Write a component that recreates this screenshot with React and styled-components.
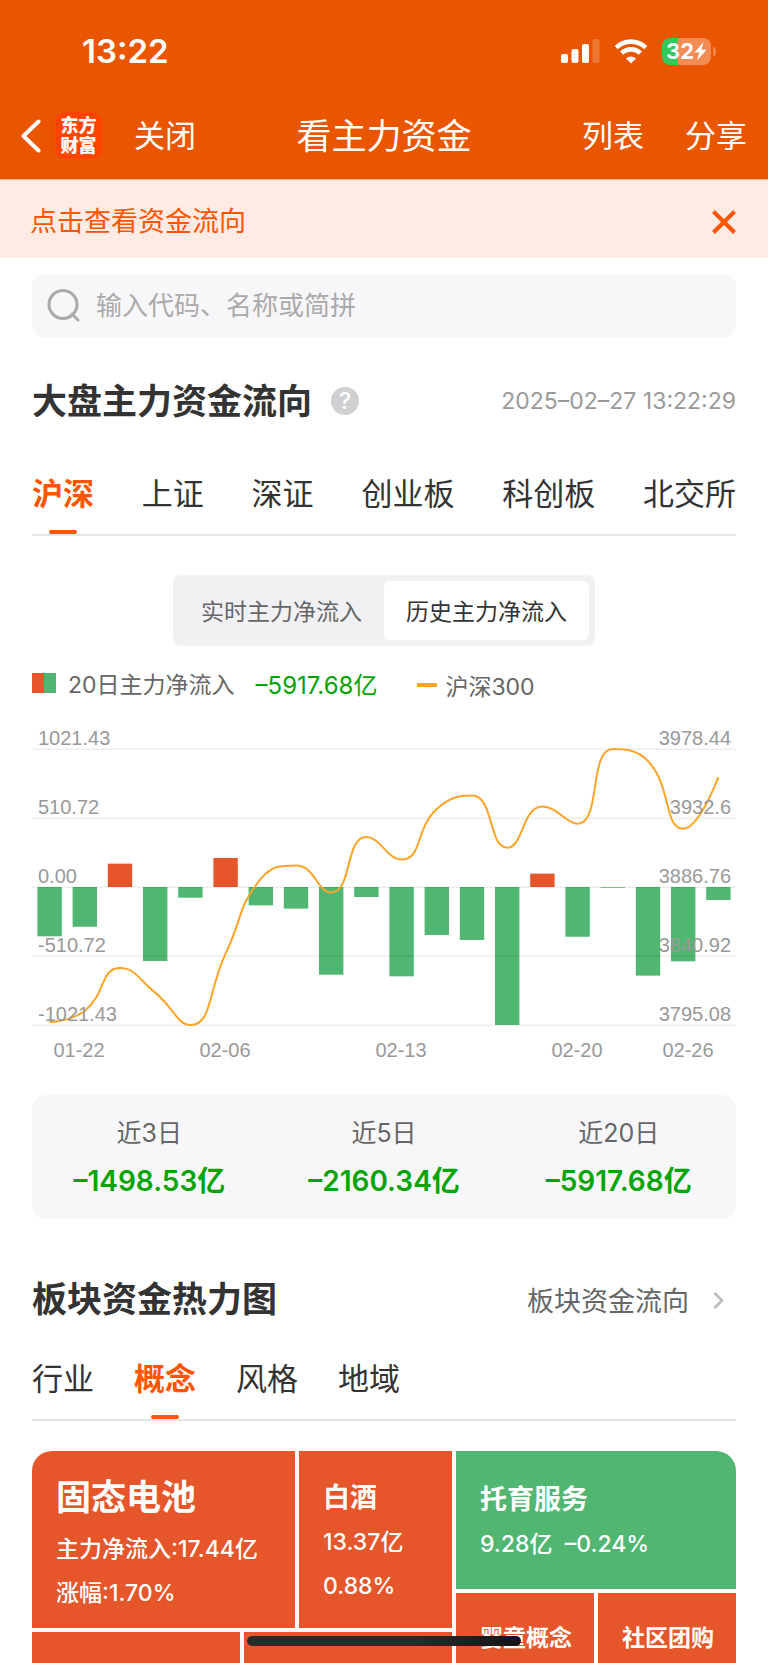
import React, { useState } from "react";
import styled, { createGlobalStyle } from "styled-components";

const GlobalStyle = createGlobalStyle`
  * {
    box-sizing: border-box;
  }
  body {
    margin: 0;
    background: #fff;
    color: #333;
    font-family: Inter, "Noto Sans CJK SC", sans-serif;
  }
  button, input {
    font-family: inherit;
    margin: 0;
    padding: 0;
    border: 0;
    background: none;
    color: inherit;
  }
  h1, h2, h3, p {
    margin: 0;
  }
  svg {
    display: block;
    flex: none;
  }
`;

const Header = styled.header`
  background: #ea5500;
  color: #fff;
  border-bottom: 1px solid #f8b596;
`;

const StatusBar = styled.div`
  display: flex;
  justify-content: space-between;
  align-items: center;
  height: 102px;
  padding: 0 52px 0 82px;
`;

const Clock = styled.span`
  font-size: 33px;
  font-weight: 600;
`;

const StatusIcons = styled.div`
  display: flex;
  align-items: center;
  gap: 14px;
`;

const Battery = styled.div`
  display: flex;
  align-items: center;
  gap: 2px;
`;

const BatteryBody = styled.div`
  display: flex;
  align-items: center;
  justify-content: center;
  width: 49px;
  height: 27px;
  border-radius: 8px;
  background: linear-gradient(90deg, #34c759 32%, #f38b54 32%);
  font-size: 22px;
  font-weight: 700;
  line-height: 27px;
`;

const BatteryNub = styled.div`
  width: 3px;
  height: 9px;
  border-radius: 0 3px 3px 0;
  background: #f0824a;
`;

const NavBar = styled.nav`
  display: grid;
  grid-template-columns: 1fr auto 1fr;
  align-items: center;
  height: 77px;
  padding: 0 21px 10px;
`;

const NavSide = styled.div`
  display: flex;
  align-items: center;
  justify-content: ${(props) => (props.$end ? "flex-end" : "flex-start")};
  gap: ${(props) => (props.$end ? "41px" : "14px")};
`;

const NavTitle = styled.h1`
  font-size: 35px;
  font-weight: 400;
  line-height: 48px;
`;

const NavButton = styled.button`
  font-size: 31px;
  line-height: 48px;
`;

const Logo = styled.div`
  display: flex;
  align-items: center;
  justify-content: center;
  width: 47px;
  height: 47px;
  margin-right: 18px;
  border-radius: 10px;
  background: #ff4400;
  font-size: 18px;
  font-weight: 900;
  line-height: 20px;
  text-align: center;
`;

const Notice = styled.div`
  display: flex;
  justify-content: space-between;
  align-items: center;
  height: 78px;
  padding: 0 32px 0 30px;
  background: #ffebe4;
  color: #ff5500;
  font-size: 27px;
`;

const CloseButton = styled.button`
  padding-top: 6px;
`;

const Main = styled.main`
  padding: 16px 32px 0;
`;

const SearchBox = styled.label`
  display: flex;
  align-items: center;
  gap: 16px;
  height: 63px;
  padding: 0 15px;
  border-radius: 12px;
  background: #f7f7fa;
`;

const SearchInput = styled.input`
  flex: 1;
  min-width: 0;
  height: 100%;
  font-size: 26px;
  outline: none;
  &::placeholder {
    color: #aaa;
    opacity: 1;
  }
`;

const SectionHead = styled.div`
  display: flex;
  align-items: center;
  justify-content: space-between;
  margin-top: ${(props) => props.$top}px;
`;

const TitleGroup = styled.div`
  display: flex;
  align-items: center;
  gap: 19px;
`;

const SectionTitle = styled.h2`
  font-size: 35px;
  font-weight: 600;
  line-height: 50px;
`;

const HelpButton = styled.button`
  width: 28px;
  height: 28px;
  border-radius: 50%;
  background: #d0d0d3;
  color: #fff;
  font-size: 23px;
  font-weight: 500;
  line-height: 28px;
`;

const DateText = styled.time`
  color: #999;
  font-size: 23px;
`;

const MoreLink = styled.a`
  display: flex;
  align-items: center;
  gap: 24px;
  padding-right: 12px;
  color: #666;
  font-size: 27px;
  text-decoration: none;
`;

const Tabs = styled.div`
  display: flex;
  justify-content: ${(props) => (props.$spread ? "space-between" : "flex-start")};
  gap: ${(props) => (props.$spread ? "0" : "40px")};
  margin-top: ${(props) => props.$top}px;
  border-bottom: 2px solid #e6e6e8;
`;

const Tab = styled.button`
  display: flex;
  flex-direction: column;
  align-items: center;
  gap: 12px;
  font-size: 31px;
  line-height: 48px;
  font-weight: ${(props) => (props.$active ? 600 : 400)};
  color: ${(props) => (props.$active ? "#ff5500" : "#333")};
  &::after {
    content: "";
    width: 28px;
    height: 4px;
    border-radius: 2px;
    background: ${(props) => (props.$active ? "#ff5500" : "transparent")};
  }
`;

const Segmented = styled.div`
  display: flex;
  width: fit-content;
  margin: 39px auto 0;
  padding: 6px;
  border-radius: 8px;
  background: #f1f1f4;
`;

const Segment = styled.button`
  width: 205px;
  height: 59px;
  padding-bottom: 2px;
  border-radius: 6px;
  font-size: 23px;
  color: ${(props) => (props.$active ? "#333" : "#666")};
  background: ${(props) => (props.$active ? "#fff" : "transparent")};
`;

const Legend = styled.div`
  display: flex;
  align-items: center;
  height: 36px;
  margin-top: 19px;
  color: #666;
  font-size: 23px;
`;

const LineLegend = styled.div`
  display: flex;
  align-items: center;
  padding-top: 4px;
`;

const BarSwatch = styled.span`
  width: 24px;
  height: 20px;
  margin-right: 12px;
  background: linear-gradient(90deg, #e6562b 50%, #50b671 50%);
`;

const LineSwatch = styled.span`
  width: 20px;
  height: 4px;
  margin: 0 8px 0 40px;
  background: #fba428;
`;

const LegendValue = styled.span`
  margin-left: 21px;
  color: #04a404;
  font-size: 24px;
`;

const ChartSvg = styled.svg`
  width: 100%;
  height: auto;
  margin-top: 22px;
  font-family: "Liberation Sans", sans-serif;
  font-size: 20px;
  fill: #999;
`;

const Summary = styled.div`
  display: grid;
  grid-template-columns: repeat(3, 1fr);
  margin-top: 30px;
  padding: 20px 0;
  border-radius: 14px;
  background: #f7f7fa;
  text-align: center;
  line-height: 36px;
`;

const SummaryLabel = styled.p`
  color: #666;
  font-size: 25px;
`;

const SummaryValue = styled.p`
  margin-top: 12px;
  color: #04a404;
  font-size: 28px;
  font-weight: 600;
`;

const HeatMap = styled.div`
  display: grid;
  grid-template-columns: 3fr 2fr;
  gap: 4px;
  margin-top: 30px;
  border-radius: 20px 20px 0 0;
  overflow: hidden;
`;

const HeatColumn = styled.div`
  display: flex;
  flex-direction: column;
  gap: 4px;
`;

const HeatRow = styled.div`
  display: grid;
  grid-template-columns: ${(props) => props.$columns};
  gap: 4px;
  flex: ${(props) => (props.$fill ? 1 : "none")};
`;

const Tile = styled.div`
  min-height: ${(props) => props.$height || 31}px;
  padding: ${(props) => props.$pad || 0}px 0 0 24px;
  background: ${(props) => (props.$down ? "#50b671" : "#e6562b")};
  color: #fff;
  white-space: nowrap;
`;

const TileName = styled.h3`
  font-size: ${(props) => props.$size}px;
  font-weight: 600;
  line-height: ${(props) => (props.$size > 30 ? 52 : 36)}px;
`;

const TileText = styled.p`
  margin-top: 8px;
  font-size: 23px;
  font-weight: 500;
  line-height: 36px;
`;

const HomeIndicator = styled.div`
  position: fixed;
  left: 50%;
  bottom: 17px;
  width: 274px;
  height: 10px;
  margin-left: -137px;
  border-radius: 5px;
  background: linear-gradient(90deg, #2b2b2b 60%, #141414);
`;

const markets = ["沪深", "上证", "深证", "创业板", "科创板", "北交所"];
const boards = ["行业", "概念", "风格", "地域"];
const ranges = ["实时主力净流入", "历史主力净流入"];

const totals = [
  { label: "近3日", value: "–1498.53亿" },
  { label: "近5日", value: "–2160.34亿" },
  { label: "近20日", value: "–5917.68亿" },
];

// daily net inflow and index close, 20 trading days
const flows = [
  -365, -294, 173, -548, -79, 215, -136, -160, -649, -74,
  -661, -355, -392, -1021, 99, -368, -5, -656, -550, -96,
];
const closes = [
  3797, 3804.6, 3832.9, 3816.6, 3795.1, 3842.5, 3892.1, 3901, 3883.1, 3920,
  3905, 3938.6, 3947.5, 3912.9, 3940.2, 3928.8, 3978.4, 3970.4, 3925.5, 3959.7,
];
const grid = [
  ["1021.43", "3978.44"],
  ["510.72", "3932.6"],
  ["0.00", "3886.76"],
  ["-510.72", "3840.92"],
  ["-1021.43", "3795.08"],
];
const days = [
  [47, "01-22"],
  [193, "02-06"],
  [369, "02-13"],
  [545, "02-20"],
  [656, "02-26"],
];

const TOP = 26;
const STEP = 69;
const SLOT = 35.2;

const clamp = (v, a, b) => Math.min(Math.max(v, Math.min(a, b)), Math.max(a, b));

// bezier through all the points, control points kept between neighbours
const smoothPath = (points) => {
  let d = `M${points[0][0]} ${points[0][1]}`;
  let out = points[0];
  for (let i = 1; i < points.length; i++) {
    const prev = points[i - 1];
    const cur = points[i];
    const next = points[i + 1];
    if (!next) {
      d += `C${out} ${cur} ${cur}`;
      break;
    }
    const lenPrev = Math.hypot(cur[0] - prev[0], cur[1] - prev[1]);
    const lenNext = Math.hypot(next[0] - cur[0], next[1] - cur[1]);
    const ratio = lenNext / (lenNext + lenPrev);
    const after = cur.map((c, k) =>
      clamp(c + (next[k] - prev[k]) * 0.5 * ratio, c, next[k])
    );
    const before = cur.map((c, k) =>
      clamp(c - ((after[k] - c) * lenPrev) / lenNext, prev[k], c)
    );
    d += `C${out} ${before} ${cur}`;
    out = cur.map((c, k) => c + ((c - before[k]) * lenNext) / lenPrev);
  }
  return d;
};

const FlowChart = () => {
  const zero = TOP + STEP * 2;
  const points = closes.map((c, i) => [
    (i + 0.5) * SLOT,
    TOP + ((3978.44 - c) / 183.36) * STEP * 4,
  ]);
  return (
    <ChartSvg viewBox="0 0 704 342" role="img" aria-label="20日主力净流入">
      {flows.map((v, i) => {
        const h = (Math.abs(v) / 1021.43) * STEP * 2;
        return (
          <rect
            key={i}
            x={(i + 0.5) * SLOT - 12.2}
            y={v > 0 ? zero - h : zero}
            width="24.4"
            height={h}
            fill={v > 0 ? "#e6562b" : "#50b671"}
          />
        );
      })}
      {grid.map(([left], i) => (
        <rect key={left} x="0" y={TOP + STEP * i - 0.5} width="704" height="1.5" fill="#000" fillOpacity="0.07" />
      ))}
      <path d={smoothPath(points)} fill="none" stroke="#fba428" strokeWidth="2" />
      {grid.map(([left, right], i) => (
        <g key={left}>
          <text x="6" y={TOP + STEP * i - 4}>{left}</text>
          <text x="699" y={TOP + STEP * i - 4} textAnchor="end">{right}</text>
        </g>
      ))}
      {days.map(([x, day]) => (
        <text key={day} x={x} y="334" textAnchor="middle">{day}</text>
      ))}
    </ChartSvg>
  );
};

const App = () => {
  const [market, setMarket] = useState("沪深");
  const [board, setBoard] = useState("概念");
  const [range, setRange] = useState("历史主力净流入");

  return (
    <>
      <GlobalStyle />
      <Header>
        <StatusBar>
          <Clock>13:22</Clock>
          <StatusIcons>
            <svg width="39" height="24" viewBox="0 0 39 24" fill="#fff">
              <rect x="0" y="15" width="7" height="9" rx="2" />
              <rect x="10.5" y="10" width="7" height="14" rx="2" />
              <rect x="21" y="5" width="7" height="19" rx="2" />
              <rect x="31.5" y="0" width="7" height="24" rx="2" fillOpacity="0.2" />
            </svg>
            <svg width="34" height="25" viewBox="0 0 34 25" fill="none" stroke="#fff" strokeWidth="4.6">
              <path d="M2.2 8.6a21.2 21.2 0 0 1 29.6 0" />
              <path d="M7.6 14.2a13.4 13.4 0 0 1 18.8 0" />
              <path d="M17 24.6l-5-5a7.2 7.2 0 0 1 10 0z" fill="#fff" stroke="none" />
            </svg>
            <Battery>
              <BatteryBody>
                32
                <svg width="13" height="19" viewBox="0 0 13 19" fill="#fff">
                  <path d="M9.6 0L0.4 10.6h5L3 18.6l9.6-10.8H7.4z" />
                </svg>
              </BatteryBody>
              <BatteryNub />
            </Battery>
          </StatusIcons>
        </StatusBar>
        <NavBar>
          <NavSide>
            <NavButton aria-label="返回">
              <svg width="20" height="34" viewBox="0 0 20 34" fill="none" stroke="#fff" strokeWidth="4" strokeLinecap="round" strokeLinejoin="round">
                <path d="M17.5 2.5L2.5 17l15 14.5" />
              </svg>
            </NavButton>
            <Logo>东方<br />财富</Logo>
            <NavButton>关闭</NavButton>
          </NavSide>
          <NavTitle>看主力资金</NavTitle>
          <NavSide $end>
            <NavButton>列表</NavButton>
            <NavButton>分享</NavButton>
          </NavSide>
        </NavBar>
      </Header>

      <Notice>
        点击查看资金流向
        <CloseButton aria-label="关闭提示">
          <svg width="24" height="24" viewBox="0 0 24 24" stroke="#ff5500" strokeWidth="4">
            <path d="M1.5 1.5l21 21M22.5 1.5l-21 21" />
          </svg>
        </CloseButton>
      </Notice>

      <Main>
        <SearchBox>
          <svg width="33" height="33" viewBox="0 0 33 33" fill="none" stroke="#aaa" strokeWidth="3">
            <circle cx="16" cy="15.5" r="14" />
            <path d="M25 25l6 6" strokeLinecap="round" />
          </svg>
          <SearchInput type="text" aria-label="搜索" placeholder="输入代码、名称或简拼" />
        </SearchBox>

        <SectionHead $top={39}>
          <TitleGroup>
            <SectionTitle>大盘主力资金流向</SectionTitle>
            <HelpButton>?</HelpButton>
          </TitleGroup>
          <DateText>2025–02–27 13:22:29</DateText>
        </SectionHead>

        <Tabs $top={44} $spread>
          {markets.map((name) => (
            <Tab key={name} $active={name === market} onClick={() => setMarket(name)}>
              {name}
            </Tab>
          ))}
        </Tabs>

        <Segmented>
          {ranges.map((name) => (
            <Segment key={name} $active={name === range} onClick={() => setRange(name)}>
              {name}
            </Segment>
          ))}
        </Segmented>

        <Legend>
          <BarSwatch />
          20日主力净流入
          <LegendValue>–5917.68亿</LegendValue>
          <LineLegend>
            <LineSwatch />
            沪深300
          </LineLegend>
        </Legend>

        <FlowChart />

        <Summary>
          {totals.map((item) => (
            <div key={item.label}>
              <SummaryLabel>{item.label}</SummaryLabel>
              <SummaryValue>{item.value}</SummaryValue>
            </div>
          ))}
        </Summary>

        <SectionHead $top={55}>
          <SectionTitle>板块资金热力图</SectionTitle>
          <MoreLink href="#">
            板块资金流向
            <svg width="11" height="22" viewBox="0 0 11 22" fill="none" stroke="#bbb" strokeWidth="2.6">
              <path d="M1.5 5L9 12.5 1.5 20" />
            </svg>
          </MoreLink>
        </SectionHead>

        <Tabs $top={31}>
          {boards.map((name) => (
            <Tab key={name} $active={name === board} onClick={() => setBoard(name)}>
              {name}
            </Tab>
          ))}
        </Tabs>

        <HeatMap>
          <HeatColumn>
            <HeatRow $columns="263fr 153fr">
              <Tile $height={177} $pad={20}>
                <TileName $size={35}>固态电池</TileName>
                <TileText>主力净流入:17.44亿</TileText>
                <TileText>涨幅:1.70%</TileText>
              </Tile>
              <Tile $pad={29}>
                <TileName $size={27}>白酒</TileName>
                <TileText>13.37亿</TileText>
                <TileText>0.88%</TileText>
              </Tile>
            </HeatRow>
            <HeatRow $columns="1fr 1fr" $fill>
              <Tile />
              <Tile />
            </HeatRow>
          </HeatColumn>
          <HeatColumn>
            <Tile $down $height={138} $pad={31}>
              <TileName $size={27}>托育服务</TileName>
              <TileText>9.28亿&nbsp; –0.24%</TileText>
            </Tile>
            <HeatRow $columns="1fr 1fr" $fill>
              <Tile $height={70} $pad={27}>
                <TileName $size={23}>婴童概念</TileName>
              </Tile>
              <Tile $height={70} $pad={27}>
                <TileName $size={23}>社区团购</TileName>
              </Tile>
            </HeatRow>
          </HeatColumn>
        </HeatMap>
      </Main>
      <HomeIndicator />
    </>
  );
};

export default App;
